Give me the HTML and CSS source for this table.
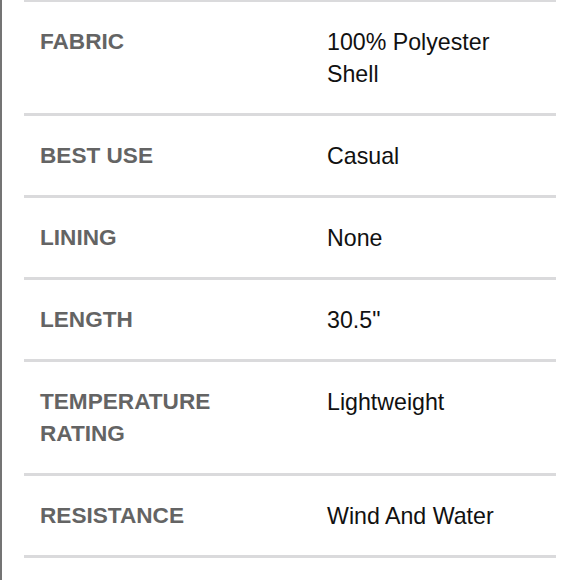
FILE: index.html
```html
<!DOCTYPE html>
<html>
<head>
<meta charset="utf-8">
<link rel="stylesheet" href="styles.css">
</head>
<body>
<div class="page">
  <div class="specs">
    <div class="row"><div class="label">FABRIC</div><div class="value">100% Polyester Shell</div></div>
    <div class="row"><div class="label">BEST USE</div><div class="value">Casual</div></div>
    <div class="row"><div class="label">LINING</div><div class="value">None</div></div>
    <div class="row"><div class="label">LENGTH</div><div class="value">30.5"</div></div>
    <div class="row"><div class="label">TEMPERATURE RATING</div><div class="value">Lightweight</div></div>
    <div class="row last"><div class="label">RESISTANCE</div><div class="value">Wind And Water</div></div>
  </div>
</div>
</body>
</html>
```
FILE: styles.css
```css
html, body {
  margin: 0;
  padding: 0;
  background: #fff;
}
.page {
  height: 580px;
  border-left: 2px solid #747474;
  overflow: hidden;
  font-family: "Liberation Sans", Arial, sans-serif;
}
.specs {
  margin-left: 22px;
  width: 532px;
  margin-top: -1px;
}
.row {
  display: grid;
  grid-template-columns: 240px 200px;
  column-gap: 47px;
  padding: 24px 16px 23px;
  border-top: 3px solid #dadadc;
  line-height: 32px;
}
.row.last {
  border-bottom: 3px solid #dadadc;
}
.label {
  font-size: 22.6px;
  font-weight: bold;
  color: #646464;
}
.value {
  font-size: 23.2px;
  color: #111111;
}
```
